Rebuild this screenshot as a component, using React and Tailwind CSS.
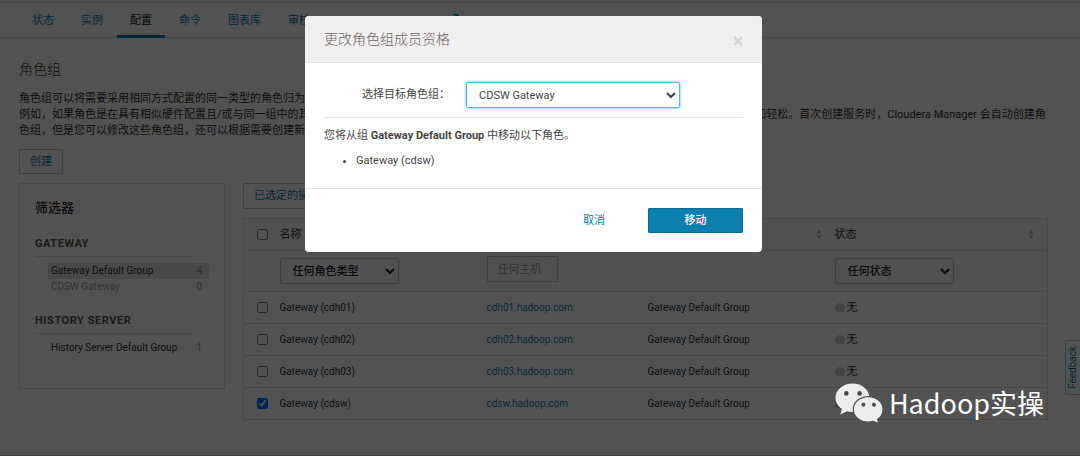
import React, { useState } from 'react';

const tabs = ['状态', '实例', '配置', '命令', '图表库', '审核', 'CDSW Gateway Web UI'];

const filters = [
    {
        title: 'GATEWAY',
        items: [
            { name: 'Gateway Default Group', count: 4, selected: true },
            { name: 'CDSW Gateway', count: 0 },
        ],
    },
    {
        title: 'HISTORY SERVER',
        items: [{ name: 'History Server Default Group', count: 1 }],
    },
];

const roles = ['cdh01', 'cdh02', 'cdh03', 'cdsw'];

const SortIcon = () => (
    <svg width="6" height="9" viewBox="0 0 6 9" className="shrink-0 fill-[#b0b0b0]">
        <path d="M3 0 L5.5 3.6 H0.5 Z M3 9 L0.5 5.4 H5.5 Z" />
    </svg>
);

const ExternalIcon = () => (
    <svg width="8" height="14" viewBox="0 0 8 14" fill="none" stroke="currentColor" strokeWidth="1.4">
        <path d="M1.5 0.7 H6 V6 M6 1 L1 7" />
    </svg>
);

const WeChatIcon = () => (
    <svg width="48" height="42" viewBox="0 0 48 42" className="shrink-0">
        <path
            d="M17.5 1.5 C8 1.5 0.5 7.8 0.5 15.8 C0.5 20.4 3 24.4 7 27 L5.3 32.6 L11.8 29.2 C13.6 29.7 15.5 30 17.5 30 C27 30 34.4 23.6 34.4 15.8 C34.4 7.8 27 1.5 17.5 1.5 Z"
            fill="#ececec"
        />
        <path
            d="M33.3 14.6 C25 14.6 18.3 20.2 18.3 27.4 C18.3 34.6 25 40.2 33.3 40.2 C35.1 40.2 36.8 39.9 38.4 39.4 L44 41.8 L42.6 37.4 C46 35 48 31.4 48 27.4 C48 20.2 41.6 14.6 33.3 14.6 Z"
            fill="#ececec"
            stroke="#525252"
            strokeWidth="1.2"
        />
        <g fill="#4a4a4a">
            <circle cx="11.3" cy="11.4" r="2.3" />
            <circle cx="24.6" cy="11.4" r="2.3" />
            <circle cx="28.4" cy="22.8" r="2" />
            <circle cx="39" cy="22.8" r="2" />
        </g>
    </svg>
);

function NavTabs() {
    return (
        <nav className="mt-[2px] flex h-9 gap-px border-y border-[#dcdcdc] bg-white pl-[19px]">
            {tabs.map((tab) => (
                <a
                    key={tab}
                    href="#"
                    className={`flex h-[35px] items-center gap-[2px] border-b-[3px] px-[13px] pt-1 ${
                        tab === '配置' ? 'border-[#0b7fad] text-[#222222]' : 'border-transparent text-[#0b7fad]'
                    }`}
                >
                    {tab}
                    {tab.endsWith('Web UI') && <ExternalIcon />}
                </a>
            ))}
        </nav>
    );
}

function Sidebar() {
    return (
        <aside className="h-[206px] w-[206px] shrink-0 border border-[#dcdcdc] px-[15px] pt-4">
            <h2 className="text-[13px] leading-4 font-medium text-[#222222]">筛选器</h2>
            {filters.map((group) => (
                <section key={group.title} className="mt-5">
                    <h3 className="mr-4 border-b border-[#dcdcdc] pb-1 leading-4 font-bold tracking-wider text-[#555555]">
                        {group.title}
                    </h3>
                    <ul className="mt-[6px] -mb-[2px] ml-[13px] text-[10px] leading-4">
                        {group.items.map((item) => (
                            <li
                                key={item.name}
                                className={`flex justify-between pr-[7px] pl-[3px] ${
                                    item.selected ? 'bg-[#e4e4e4]' : ''
                                } ${item.count === 0 ? 'text-[#999999]' : ''}`}
                            >
                                <span className="whitespace-nowrap">{item.name}</span>
                                <span className="text-[#999999]">{item.count}</span>
                            </li>
                        ))}
                    </ul>
                </section>
            ))}
        </aside>
    );
}

function RoleTable() {
    const [checked, setChecked] = useState(['cdsw']);

    const toggle = (role) => {
        setChecked(checked.includes(role) ? checked.filter((r) => r !== role) : [...checked, role]);
    };

    return (
        <table className="mt-[9px] w-full table-fixed border border-[#dcdcdc] text-left">
            <thead className="bg-[#fbfbfb]">
                <tr className="h-8 border-b border-[#dcdcdc] text-[#555555]">
                    <th className="w-7 pl-[13px]">
                        <input type="checkbox" aria-label="全选" className="block h-[11px] w-[11px]" />
                    </th>
                    <th className="w-[207px] pl-2 font-medium">名称</th>
                    <th className="w-[161px] pl-2 font-medium">主机</th>
                    <th className="w-[187px] pr-[5px] pl-2 font-medium">
                        <div className="flex items-center justify-between">
                            角色组
                            <SortIcon />
                        </div>
                    </th>
                    <th className="pr-[13px] pl-2 font-medium">
                        <div className="flex items-center justify-between">
                            状态
                            <SortIcon />
                        </div>
                    </th>
                </tr>
                <tr className="h-[41px] border-b border-[#dcdcdc]">
                    <td></td>
                    <td className="pl-2">
                        <select
                            aria-label="角色类型"
                            className="block h-[26px] w-[119px] rounded-[2px] border border-[#c4c4c4] pl-2 font-medium text-[#222222]"
                        >
                            <option>任何角色类型</option>
                        </select>
                    </td>
                    <td className="pl-2">
                        <input
                            type="text"
                            aria-label="主机"
                            placeholder="任何主机"
                            className="mb-1 block h-[26px] w-[71px] border border-[#c4c4c4] px-[10px] placeholder:text-[#999999]"
                        />
                    </td>
                    <td></td>
                    <td className="pl-2">
                        <select
                            aria-label="状态"
                            className="block h-[26px] w-[119px] rounded-[2px] border border-[#c4c4c4] pl-2 font-medium text-[#222222]"
                        >
                            <option>任何状态</option>
                        </select>
                    </td>
                </tr>
            </thead>
            <tbody>
                {roles.map((role) => (
                    <tr key={role} className="h-8 border-b border-[#dcdcdc] text-[10px]">
                        <td className="pl-[13px]">
                            <input
                                type="checkbox"
                                aria-label={`Gateway (${role})`}
                                checked={checked.includes(role)}
                                onChange={() => toggle(role)}
                                className="block h-[11px] w-[11px]"
                            />
                        </td>
                        <td className="pl-2">Gateway ({role})</td>
                        <td className="pl-2">
                            <a href="#" className="text-[#0b7fad]">{role}.hadoop.com</a>
                        </td>
                        <td className="pl-2">Gateway Default Group</td>
                        <td className="pl-2">
                            <div className="flex items-center gap-[2px] text-[11px]">
                                <span className="h-[10px] w-[10px] rounded-full bg-[#cccccc]"></span>
                                无
                            </div>
                        </td>
                    </tr>
                ))}
            </tbody>
        </table>
    );
}

function MoveDialog() {
    return (
        <div
            role="dialog"
            aria-labelledby="dialog-title"
            className="w-[457px] overflow-hidden rounded-[4px] bg-white text-[#444444]"
        >
            <header className="flex h-[47px] items-center justify-between border-b border-[#e2e2e2] bg-[#f0eeef] px-[19px]">
                <h1 id="dialog-title" className="text-[14px] font-light text-[#666666]">更改角色组成员资格</h1>
                <button type="button" aria-label="关闭" className="mt-1 text-[#d3d3d3]">
                    <svg width="10" height="10" viewBox="0 0 10 10" fill="none" stroke="currentColor" strokeWidth="2.6">
                        <path d="M1.2 1.2 L8.8 8.8 M8.8 1.2 L1.2 8.8" />
                    </svg>
                </button>
            </header>

            <div className="p-[19px]">
                <div className="flex items-center border-b border-[#e2e2e2] pb-[9px] pl-[38px]">
                    <label htmlFor="target-group" className="w-[104px]">选择目标角色组：</label>
                    <select
                        id="target-group"
                        className="h-[26px] w-[214px] rounded-[2px] border border-[#4fb5e2] pl-2 shadow-[0_0_3px_#4fb5e2]"
                    >
                        <option>CDSW Gateway</option>
                    </select>
                </div>
                <p className="mt-[10px]">
                    您将从组 <b className="font-bold">Gateway Default Group</b> 中移动以下角色。
                </p>
                <ul className="mt-[9px] list-disc pl-8">
                    <li>Gateway (cdsw)</li>
                </ul>
            </div>

            <footer className="flex items-center justify-end border-t border-[#e2e2e2] p-[19px]">
                <button type="button" className="mr-8 px-[11px] text-[#0b7fad]">取消</button>
                <button
                    type="button"
                    className="h-[25px] w-[95px] rounded-[1px] border border-[#0a6c93] bg-[#0b7fad] font-medium text-white"
                >
                    移动
                </button>
            </footer>
        </div>
    );
}

export default function App() {
    return (
        <div className="relative min-h-screen overflow-hidden border-b border-[#454143] bg-white font-['Roboto','Noto_Sans_CJK_SC',sans-serif] text-[11px] leading-4 text-[#333333]">
            <NavTabs />

            <main className="pr-8 pb-[34px] pl-[19px]">
                <h1 className="mt-[23px] text-[14px] font-light">角色组</h1>
                <p className="mt-[14px]">
                    角色组可以将需要采用相同方式配置的同一类型的角色归为一组。
                    <br />
                    例如，如果角色是在具有相似硬件配置且/或与同一组中的其他角色相同的 CDH 上运行，则可以将这些角色归为同一个角色组，这样能让配置管理工作更加轻松。首次创建服务时，Cloudera Manager 会自动创建角色组，但是您可以修改这些角色组，还可以根据需要创建新组。
                </p>
                <button type="button" className="mt-[10px] block h-[25px] border border-[#c4c4c4] px-[10px] text-[#0b7fad]">
                    创建
                </button>

                <div className="mt-[9px] flex items-start gap-[18px]">
                    <Sidebar />
                    <div className="min-w-0 flex-1">
                        <button
                            type="button"
                            className="block h-[26px] rounded-[2px] border border-[#c4c4c4] px-[10px] text-[#0b7fad]"
                        >
                            已选定的操作
                        </button>
                        <RoleTable />
                    </div>
                </div>
            </main>

            {/* Feedback handle on the right edge */}
            <a
                href="#"
                className="absolute top-[340px] right-0 flex h-[55px] w-[15px] rotate-180 items-center justify-center border border-l-0 border-[#c4c4c4] text-[10px] text-[#0b7fad] [writing-mode:vertical-rl]"
            >
                Feedback
            </a>

            {/* Dimmed backdrop with the dialog */}
            <div className="absolute inset-0 flex items-start justify-center bg-black/68 pt-4 pr-[13px]">
                <MoveDialog />
            </div>

            <div className="pointer-events-none absolute right-9 bottom-[31px] flex items-center gap-[6px] text-white">
                <WeChatIcon />
                <span className="text-[27px] leading-10 font-['Noto_Sans_CJK_SC',sans-serif]">Hadoop实操</span>
            </div>
        </div>
    );
}
